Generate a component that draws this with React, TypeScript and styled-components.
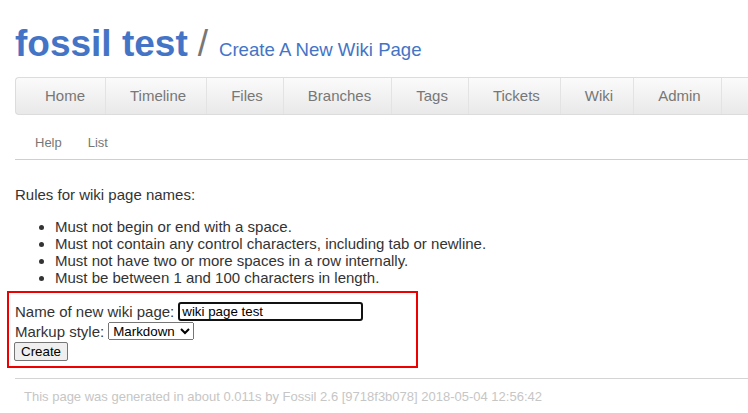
import React from 'react';
import styled, { createGlobalStyle } from 'styled-components';

const GlobalStyle = createGlobalStyle`
  html, body {
    margin: 0;
    padding: 0;
    background: #fff;
    overflow: hidden;
  }
  body {
    font-family: "Liberation Sans", Arial, sans-serif;
    color: #333;
  }
`;

const Page = styled.div`
  width: 820px;
  padding-left: 15px;
`;

const Header = styled.div`
  padding-top: 22px;
  height: 44px;
  margin-bottom: 11px;
  display: flex;
  align-items: baseline;
  white-space: nowrap;
`;

const Project = styled.span`
  font-size: 37px;
  line-height: 44px;
  font-weight: bold;
  color: #4474c6;
`;

const Slash = styled.span`
  font-size: 37px;
  line-height: 44px;
  color: #777;
  margin: 0 11px 0 10px;
`;

const PageTitle = styled.span`
  font-size: 18.6px;
  color: #4474c6;
`;

const MainMenu = styled.nav`
  display: flex;
  height: 36px;
  padding-left: 5px;
  border: 1px solid #dcdcdc;
  border-right: none;
  border-radius: 4px 0 0 4px;
  background: linear-gradient(#fbfbfb, #e9e9e9);
`;

const MenuItem = styled.a`
  display: block;
  margin-left: 4px;
  padding: 0 20px;
  line-height: 36px;
  font-size: 15px;
  color: #777;
  text-decoration: none;
  border-right: 1px solid #e3e3e3;
`;

const SubMenu = styled.div`
  display: flex;
  gap: 26px;
  box-sizing: border-box;
  height: 45px;
  padding: 20px 0 0 20px;
  border-bottom: 1px solid #cfcfcf;
`;

const SubItem = styled.a`
  font-size: 13px;
  line-height: 16px;
  color: #777;
  text-decoration: none;
`;

const Content = styled.div`
  width: 733px;
  font-size: 15px;
  line-height: 17px;
`;

const Intro = styled.p`
  margin: 26px 0 15px;
`;

const Rules = styled.ul`
  margin: 0 0 5px;
  padding-left: 40px;
`;

const NewPageForm = styled.form`
  margin-left: -8px;
  width: 395px;
  padding: 8px 6px 5px;
  border: 2px solid #e00;
`;

const Row = styled.div`
  display: flex;
  align-items: center;
  gap: 4px;
  height: 20px;
`;

const NameInput = styled.input`
  box-sizing: border-box;
  width: 185px;
  height: 19px;
  padding: 0 2px;
  font: 13.33px "Liberation Sans", Arial, sans-serif;
  color: #000;
  border: 2px solid #111;
  border-radius: 3px;
  outline: none;
`;

const StyleSelect = styled.select`
  height: 18px;
  font: 13.33px "Liberation Sans", Arial, sans-serif;
  color: #000;
`;

const CreateButton = styled.button`
  margin-left: -1px;
  height: 19px;
  padding: 0 6px;
  font: 13.33px "Liberation Sans", Arial, sans-serif;
  color: #000;
  background: #efefef;
  border: 1px solid #767676;
  border-radius: 2px;
`;

const Footer = styled.div`
  margin-top: 10px;
  border-top: 1px solid #d4d4d4;
  padding: 10px 0 0 9px;
  font-size: 13px;
  line-height: 16px;
  color: #c6c6c6;
  white-space: nowrap;
`;

const menu = ['Home', 'Timeline', 'Files', 'Branches', 'Tags', 'Tickets', 'Wiki', 'Admin'];

const rules = [
  'Must not begin or end with a space.',
  'Must not contain any control characters, including tab or newline.',
  'Must not have two or more spaces in a row internally.',
  'Must be between 1 and 100 characters in length.',
];

const App: React.FC = () => {
  return (
    <Page>
      <GlobalStyle />
      <Header>
        <Project>fossil test</Project>
        <Slash>/</Slash>
        <PageTitle>Create A New Wiki Page</PageTitle>
      </Header>
      <MainMenu>
        {menu.map((m) => (
          <MenuItem key={m} href="#">{m}</MenuItem>
        ))}
      </MainMenu>
      <SubMenu>
        <SubItem href="#">Help</SubItem>
        <SubItem href="#">List</SubItem>
      </SubMenu>
      <Content>
        <Intro>Rules for wiki page names:</Intro>
        <Rules>
          {rules.map((r) => (
            <li key={r}>{r}</li>
          ))}
        </Rules>
        <NewPageForm onSubmit={(e) => e.preventDefault()}>
          <Row>
            Name of new wiki page:
            <NameInput defaultValue="wiki page test" />
          </Row>
          <Row>
            Markup style:
            <StyleSelect defaultValue="markdown">
              <option value="markdown">Markdown</option>
              <option value="fossil">Fossil Wiki</option>
              <option value="plain">Plain Text</option>
            </StyleSelect>
          </Row>
          <Row>
            <CreateButton type="submit">Create</CreateButton>
          </Row>
        </NewPageForm>
        <Footer>
          This page was generated in about 0.011s by Fossil 2.6 [9718f3b078] 2018-05-04 12:56:42
        </Footer>
      </Content>
    </Page>
  );
};

export default App;
